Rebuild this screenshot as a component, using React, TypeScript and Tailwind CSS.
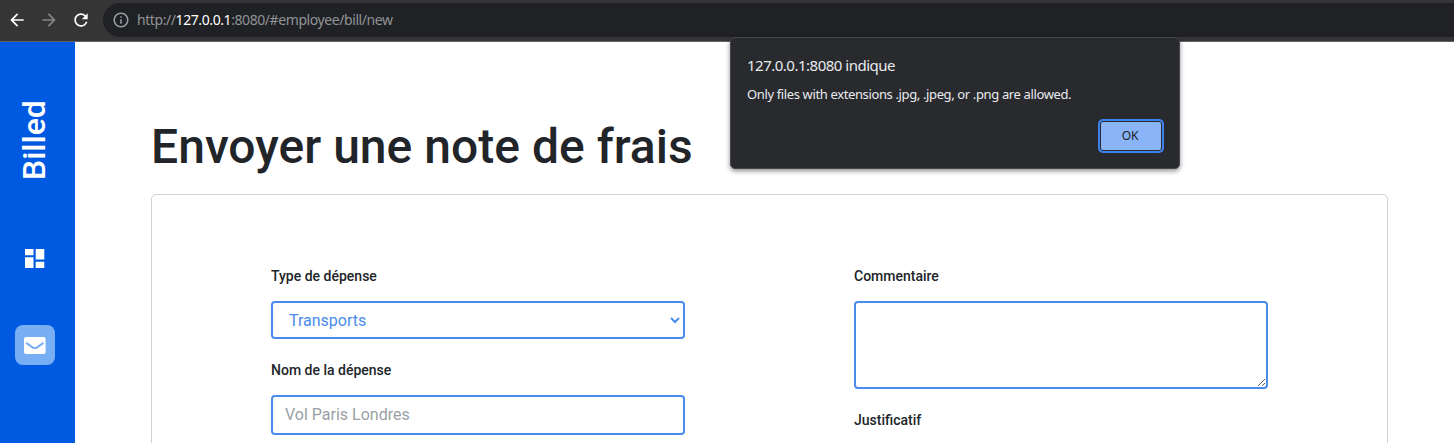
import type { ReactNode } from 'react'
import { MdArrowBack, MdArrowForward, MdRefresh, MdInfoOutline } from 'react-icons/md'

function BrowserBar() {
  return (
    <header className="flex h-[42px] shrink-0 items-start border-b border-[#636363] bg-[#353535] pl-[7px] font-['Noto_Sans',sans-serif]">
      <div className="flex h-[40px] w-[96px] items-center gap-3 text-white">
        <MdArrowBack size={20} />
        <MdArrowForward size={20} className="text-[#868686]" />
        <MdRefresh size={20} />
      </div>
      <div className="mt-[3px] flex h-[34px] flex-1 items-center rounded-l-full bg-[#202124] pl-[9px]">
        <MdInfoOutline size={18} className="text-[#9aa0a6]" />
        <span className="ml-[7px] whitespace-nowrap text-[14px] leading-5 tracking-[-0.42px] text-[#8f9398]">
          http://<span className="text-white">127.0.0.1</span>:8080/#employee/bill/new
        </span>
      </div>
    </header>
  )
}

function Sidebar() {
  return (
    <nav className="flex w-[75px] shrink-0 flex-col items-center bg-[#0059e1] pt-[54px] pr-[5px]">
      <div className="mr-[3px] flex h-[88px] w-10 rotate-180 items-center justify-center text-[32px] leading-10 font-medium text-white [writing-mode:vertical-rl]">
        Billed
      </div>
      <div className="mt-[54px] flex h-10 w-10 items-center justify-center">
        <svg width="20" height="20" viewBox="0 0 20 20" fill="white">
          <path d="M0 1h8.5v6.2H0zM0 9.3h8.5V20H0zM10.7 1h8.6v10.5h-8.6zM10.7 13.8h8.6V20h-8.6z" />
        </svg>
      </div>
      <div className="mt-[47px] flex h-10 w-10 items-center justify-center rounded-lg bg-[#77aef4]">
        <svg width="22" height="18" viewBox="0 0 22 18">
          <rect x="0" y="1" width="21.6" height="17" rx="2" fill="white" />
          <path d="m2.1 6.9 6.4 4.4q2.3 1.5 4.6 0l6.4-4.4" fill="none" stroke="#77aef4" strokeWidth="2.1" />
        </svg>
      </div>
    </nav>
  )
}

function Field({ label, children }: { label: string; children: ReactNode }) {
  return (
    <label className="flex flex-col text-[14px] leading-[21px] font-medium text-[#212529]">
      <span className="mb-[14px]">{label}</span>
      {children}
    </label>
  )
}

function Alert() {
  return (
    <div
      role="alertdialog"
      className="absolute top-[37px] left-[730px] flex h-[132px] w-[450px] flex-col rounded-[5px] border border-[#45474a] bg-[#292a2d] px-4 pt-[16px] font-['Noto_Sans',sans-serif] text-[#e8eaed] shadow-[0_2px_5px_rgba(0,0,0,0.45)]"
    >
      <h2 className="text-[15px] leading-[22px] tracking-[-0.5px] whitespace-nowrap">
        127.0.0.1:8080 indique
      </h2>
      <p className="mt-[8px] text-[13px] leading-5 tracking-[-0.37px] whitespace-nowrap">
        Only files with extensions .jpg, .jpeg, or .png are allowed.
      </p>
      <button className="mt-[15px] mr-[-1px] flex h-[34px] w-[66px] items-center justify-center self-end rounded-[5px] border-2 border-[#3b82ee] bg-[#8ab4f8] pr-0.5 text-[12px] tracking-[-0.2px] text-[#202124] shadow-[inset_0_0_0_1px_#292a2d]">
        OK
      </button>
    </div>
  )
}

export default function App() {
  return (
    <div className="relative flex h-[443px] w-[1454px] flex-col overflow-hidden bg-white font-[Roboto,sans-serif]">
      <BrowserBar />
      <div className="flex min-h-0 flex-1">
        <Sidebar />
        <main className="flex flex-1 flex-col pt-[76px] pr-[66px] pl-[76px]">
          <h1 className="text-[48px] leading-[58px] font-medium tracking-[0.02px] text-[#212529]">Envoyer une note de frais</h1>
          <section className="mt-[18px] flex h-[400px] shrink-0 items-start justify-between rounded-[5px] border border-[#d1d1d1] px-[119px] pt-[71px]">
            <div className="flex w-[414px] flex-col gap-[21px]">
              <Field label="Type de dépense">
                <select className="h-[38px] rounded border-2 border-[#4b8beb] bg-white pr-[13px] pl-3 text-[16px] font-normal text-[#4b8beb]">
                  <option>Transports</option>
                </select>
              </Field>
              <Field label="Nom de la dépense">
                <input
                  placeholder="Vol Paris Londres"
                  className="h-10 rounded border-2 border-[#4b8beb] px-3 pb-0.5 text-[16px] font-normal placeholder:text-[#9a9fa4]"
                />
              </Field>
            </div>
            <div className="flex w-[414px] flex-col gap-[21px]">
              <Field label="Commentaire">
                <textarea className="h-[88px] resize rounded border-2 border-[#4b8beb] px-3 text-[16px] font-normal" />
              </Field>
              <Field label="Justificatif">
                <input type="file" className="h-10 rounded border-2 border-[#4b8beb]" />
              </Field>
            </div>
          </section>
        </main>
      </div>
      <Alert />
    </div>
  )
}
